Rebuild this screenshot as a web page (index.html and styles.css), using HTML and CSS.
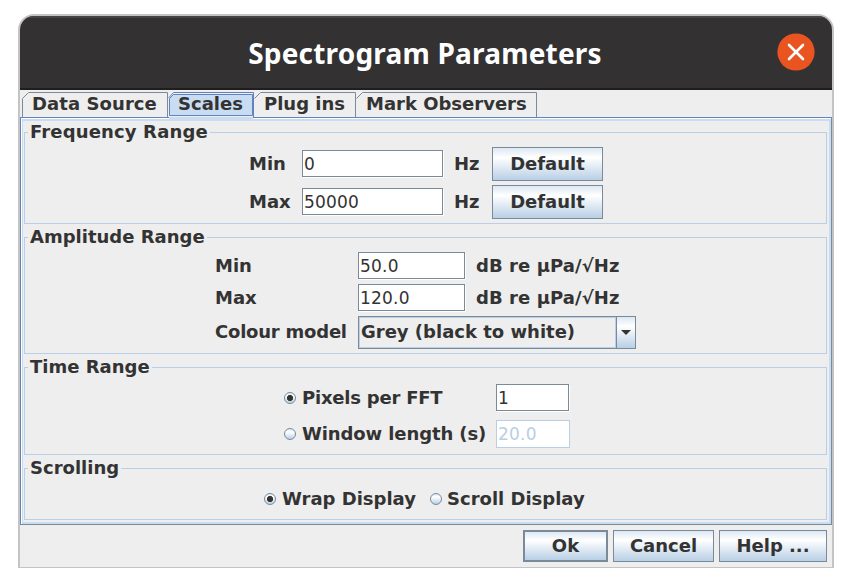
FILE: index.html
```html
<!DOCTYPE html>
<html lang="en">
<head>
<meta charset="utf-8">
<title>Spectrogram Parameters</title>
<link rel="stylesheet" href="styles.css">
</head>
<body>
<main class="window">
  <header class="titlebar">
    <h1 class="title">Spectrogram Parameters</h1>
    <svg class="close" viewBox="0 0 38 38" role="img" aria-label="Close"><circle cx="19" cy="19" r="18.6" fill="#e95420"/><path d="M12 12L26 26M26 12L12 26" stroke="#fff" stroke-width="2.6" stroke-linecap="round"/></svg>
  </header>
  <nav class="tabs">
    <div class="tab tab-source"><svg class="edge" viewBox="0 0 146 26"><path d="M.5 26V6.500L6.500 .5H145.500V26"/></svg><span>Data Source</span></div>
    <div class="tab tab-scales"><svg class="edge" viewBox="0 0 86 28"><path class="halo" d="M1 28V5.500L5.500 .5H85V28Z"/><path class="active" d="M1.500 23.500V6.500L5.500 2.500H84.500V23.500Z"/><path class="base" d="M1 26.500H85"/><path class="outline" d="M.5 6L5.500 .5H85.500V25.500"/></svg><span>Scales</span></div>
    <div class="tab tab-plugins"><svg class="edge" viewBox="0 0 102 26"><path d="M.5 6.500L6.500 .5H101.500V26"/></svg><span>Plug ins</span></div>
    <div class="tab tab-marks"><svg class="edge" viewBox="0 0 181 26"><path d="M.5 6.500L6.500 .5H180.500V26"/></svg><span>Mark Observers</span></div>
  </nav>
  <div class="pane">
    <section class="group frequency">
      <h2><span>Frequency Range</span></h2>
      <div class="grid">
        <span class="label">Min</span><div class="field">0</div><span class="label">Hz</span><button class="button">Default</button>
        <span class="label">Max</span><div class="field">50000</div><span class="label">Hz</span><button class="button">Default</button>
      </div>
    </section>
    <section class="group amplitude">
      <h2><span>Amplitude Range</span></h2>
      <div class="grid">
        <span class="label">Min</span><div class="field">50.0</div><span class="label unit">dB re µPa/√Hz</span>
        <span class="label">Max</span><div class="field">120.0</div><span class="label unit">dB re µPa/√Hz</span>
        <span class="label model">Colour model</span>
        <div class="combo"><span class="combo-value">Grey (black to white)</span><span class="combo-arrow"><svg viewBox="0 0 10 5"><path d="M0 0H10L5 5Z" fill="#333"/></svg></span></div>
      </div>
    </section>
    <section class="group time">
      <h2><span>Time Range</span></h2>
      <div class="grid">
        <span class="radio on"></span><span class="label pixels">Pixels per FFT</span><div class="field">1</div>
        <span class="radio"></span><span class="label seconds">Window length (s)</span><div class="field disabled">20.0</div>
      </div>
    </section>
    <section class="group scrolling">
      <h2><span>Scrolling</span></h2>
      <div class="grid">
        <span class="radio on"></span><span class="label">Wrap Display</span><span class="radio"></span><span class="label">Scroll Display</span>
      </div>
    </section>
  </div>
  <footer class="actions">
    <button class="button ok">Ok</button><button class="button cancel">Cancel</button><button class="button help">Help ...</button>
  </footer>
</main>
</body>
</html>
```
FILE: styles.css
```css
* { box-sizing: border-box; }
body { margin: 0; padding: 14px 18px; background: #fff; color: #333; font: bold 18px/22px "DejaVu Sans", sans-serif; }
.window { width: 816px; height: 554px; border: 2px solid #c4c4c4; border-bottom-width: 1px; border-radius: 16px 16px 0 0; background: #eee; overflow: hidden; }
.titlebar { display: grid; grid-template-columns: 53px 1fr 38px; padding: 0 17px 2px 0; align-items: center; height: 74px; background: #333132; border-top: 2px solid #464546; border-bottom: 2px solid #201d1f; }
.title { grid-column: 2; margin: 0; padding-top: 2px; color: #fff; text-align: center; font: bold 28px/38px "Noto Sans", sans-serif; letter-spacing: 0.2px; white-space: nowrap; }
.close { width: 38px; height: 38px; }

.tabs { display: flex; height: 27px; padding: 2px 0 0 2px; }
.tab { position: relative; height: 26px; padding-left: 10px; line-height: 23px; white-space: nowrap; }
.tab span { position: relative; }
.edge { position: absolute; left: 0; top: 0; width: 100%; height: 26px; overflow: visible; fill: none; stroke: #7a8a99; }
.tab-source { width: 146px; letter-spacing: 0.08px; }
.tab-scales { width: 86px; z-index: 2; }
.tab-scales .edge { height: 28px; }
.tab-plugins { width: 102px; }
.tab-marks { width: 181px; }
.edge .halo { fill: #eee; stroke: none; }
.edge .active { fill: #c8ddf2; stroke: #6382bf; }
.edge .base { stroke: #c8ddf2; stroke-width: 3px; }
.edge .outline { stroke: #6382bf; }

.pane { height: 408px; padding: 12px 0 0 1px; border: 1px solid #6382bf; border-right-color: #7a8a99; border-bottom-color: #7a8a99; box-shadow: inset 1px 1px #fff, inset -2px -2px #c8ddf2, inset 2px 3px #c8ddf2; }
.group { width: 803px; margin: 2px 0 13px 2px; border: 1px solid #b8cfe5; }
.group h2 { height: 20px; margin: -10px 0 0 3px; font: inherit; line-height: 18px; }
.group h2 span { display: inline-block; padding: 0 2px; background: #eee; }
.frequency h2 { letter-spacing: 0.15px; }
.grid { display: grid; align-items: center; white-space: nowrap; }
.frequency { height: 92px; }
.frequency .grid { margin: 4px 0 0 224px; grid-template-columns: 53px 141px 49px 111px; grid-template-rows: 34px 34px; row-gap: 4px; }
.frequency .label:nth-child(4n+3) { padding-left: 11px; }
.frequency .field { margin-bottom: 1px; }
.amplitude { height: 117px; }
.amplitude .grid { margin: 4px 0 0 190px; grid-template-columns: 143px 107px 171px; grid-template-rows: 27px 27px 33px; row-gap: 5px; }
.unit { padding-left: 11px; letter-spacing: 0.08px; }
.model { padding-bottom: 2px; letter-spacing: -0.22px; }
.time { height: 88px; }
.time .grid { margin: 6px 0 0 259px; grid-template-columns: 18px 194px 74px; grid-template-rows: 27px 28px; row-gap: 9px; }
.pixels { letter-spacing: -0.22px; }
.seconds { letter-spacing: -0.1px; }
.scrolling { height: 52px; margin-bottom: 0; }
.scrolling .grid { margin: 8px 0 0 239px; grid-template-columns: 18px 148px 17px 150px; grid-template-rows: 24px; }

.field { height: 27px; padding-left: 1px; border: 1px solid #7a8a99; background: #fff; box-shadow: 1px 1px #fff; font-weight: normal; font-size: 17px; line-height: 27px; letter-spacing: 0.2px; }
.time .field { width: 73px; }
.time .disabled { width: 74px; height: 28px; border-color: #b8cfe5; color: #b8cfe5; box-shadow: none; }
.button { height: 34px; margin: 0; padding: 0; border: 1px solid #7a8a99; border-radius: 0; color: #333; background: linear-gradient(#dde8f3 0%, #fff 30%, #b8cfe5 100%); font: inherit; }
.combo { grid-column: 2 / 4; display: flex; width: 278px; height: 33px; border: 1px solid #7a8a99; }
.combo-value { width: 257px; padding-left: 1px; border: 1px solid #b8cfe5; line-height: 27px; }
.combo-arrow { display: grid; place-items: center; width: 19px; border-left: 1px solid #7a8a99; background: linear-gradient(#dde8f3 0%, #fff 30%, #b8cfe5 100%); }
.combo-arrow svg { width: 10px; height: 5px; }
.radio { width: 12px; height: 12px; border: 1px solid #7a8a99; border-radius: 50%; background: linear-gradient(#dde8f3 0%, #fff 30%, #b8cfe5 100%); }
.radio.on { background: radial-gradient(circle, #333 0 2.800px, transparent 3.300px), linear-gradient(#dde8f3 0%, #fff 30%, #b8cfe5 100%); }

.actions { display: flex; justify-content: flex-end; gap: 5px; padding: 5px 5px 0; }
.actions .button { height: 32px; }
.ok { width: 85px; border-width: 2px; }
.cancel { width: 101px; }
.help { width: 108px; }
```
